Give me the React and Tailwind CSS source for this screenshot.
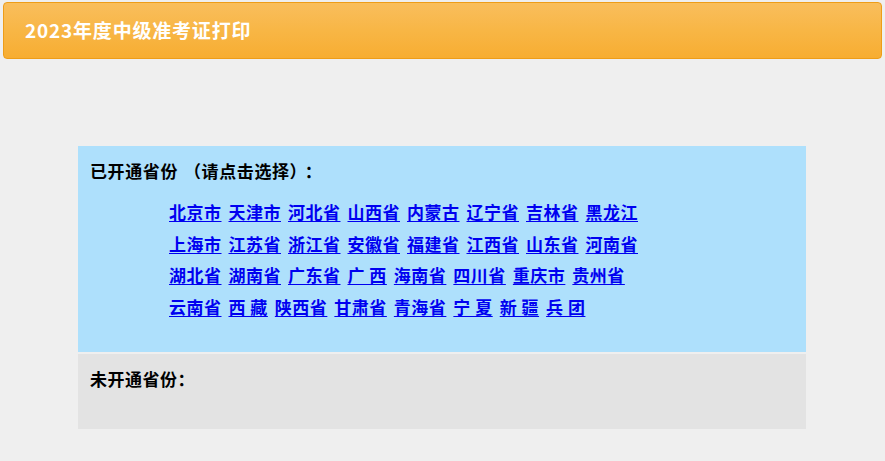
import React from "react";

const rows = [
  ["北京市", "天津市", "河北省", "山西省", "内蒙古", "辽宁省", "吉林省", "黑龙江"],
  ["上海市", "江苏省", "浙江省", "安徽省", "福建省", "江西省", "山东省", "河南省"],
  ["湖北省", "湖南省", "广东省", "广 西", "海南省", "四川省", "重庆市", "贵州省"],
  ["云南省", "西 藏", "陕西省", "甘肃省", "青海省", "宁 夏", "新 疆", "兵 团"],
];

const font = { fontFamily: '"Noto Sans CJK SC", "Noto Sans", sans-serif' };

export default function App() {
  return (
    <div className="min-h-screen bg-[#efefef] pt-[2px] px-[3px]" style={font}>
      <div className="h-[57px] rounded-[4px] border border-[#ee9d18] bg-gradient-to-b from-[#f9be5c] via-[#f8b645] to-[#f7ad31] flex items-center pl-[21px]">
        <h1 className="text-[19px] font-bold text-white tracking-[0.8px]">2023年度中级准考证打印</h1>
      </div>

      <div className="mt-[87px] mx-[75px] w-[728px]">
        <div className="bg-[#aee0fc] pt-[12px] pb-[30px] pl-[12px]">
          <p className="text-[17px] font-bold text-black leading-[26px] tracking-[0.6px]">
            已开通省份<span className="ml-[6px]">（</span>请点击选择<span className="mr-[6px]">）</span>：
          </p>
          <div className="mt-[12px] ml-[79px] flex flex-col">
            {rows.map((row, i) => (
              <div key={i} className="flex gap-[7px] leading-[31.5px]">
                {row.map((p) => (
                  <a key={p} href="#" className="text-[17px] font-bold text-[#0000f0] underline underline-offset-2 tracking-[0.5px]">
                    {p.replace(" ", "\u00a0")}
                  </a>
                ))}
              </div>
            ))}
          </div>
        </div>
        <div className="mt-[2px] bg-[#e3e3e3] h-[75px] pt-[12px] pl-[12px]">
          <p className="text-[17px] font-bold text-black leading-[26px] tracking-[0.5px]">未开通省份：</p>
        </div>
      </div>
    </div>
  );
}
